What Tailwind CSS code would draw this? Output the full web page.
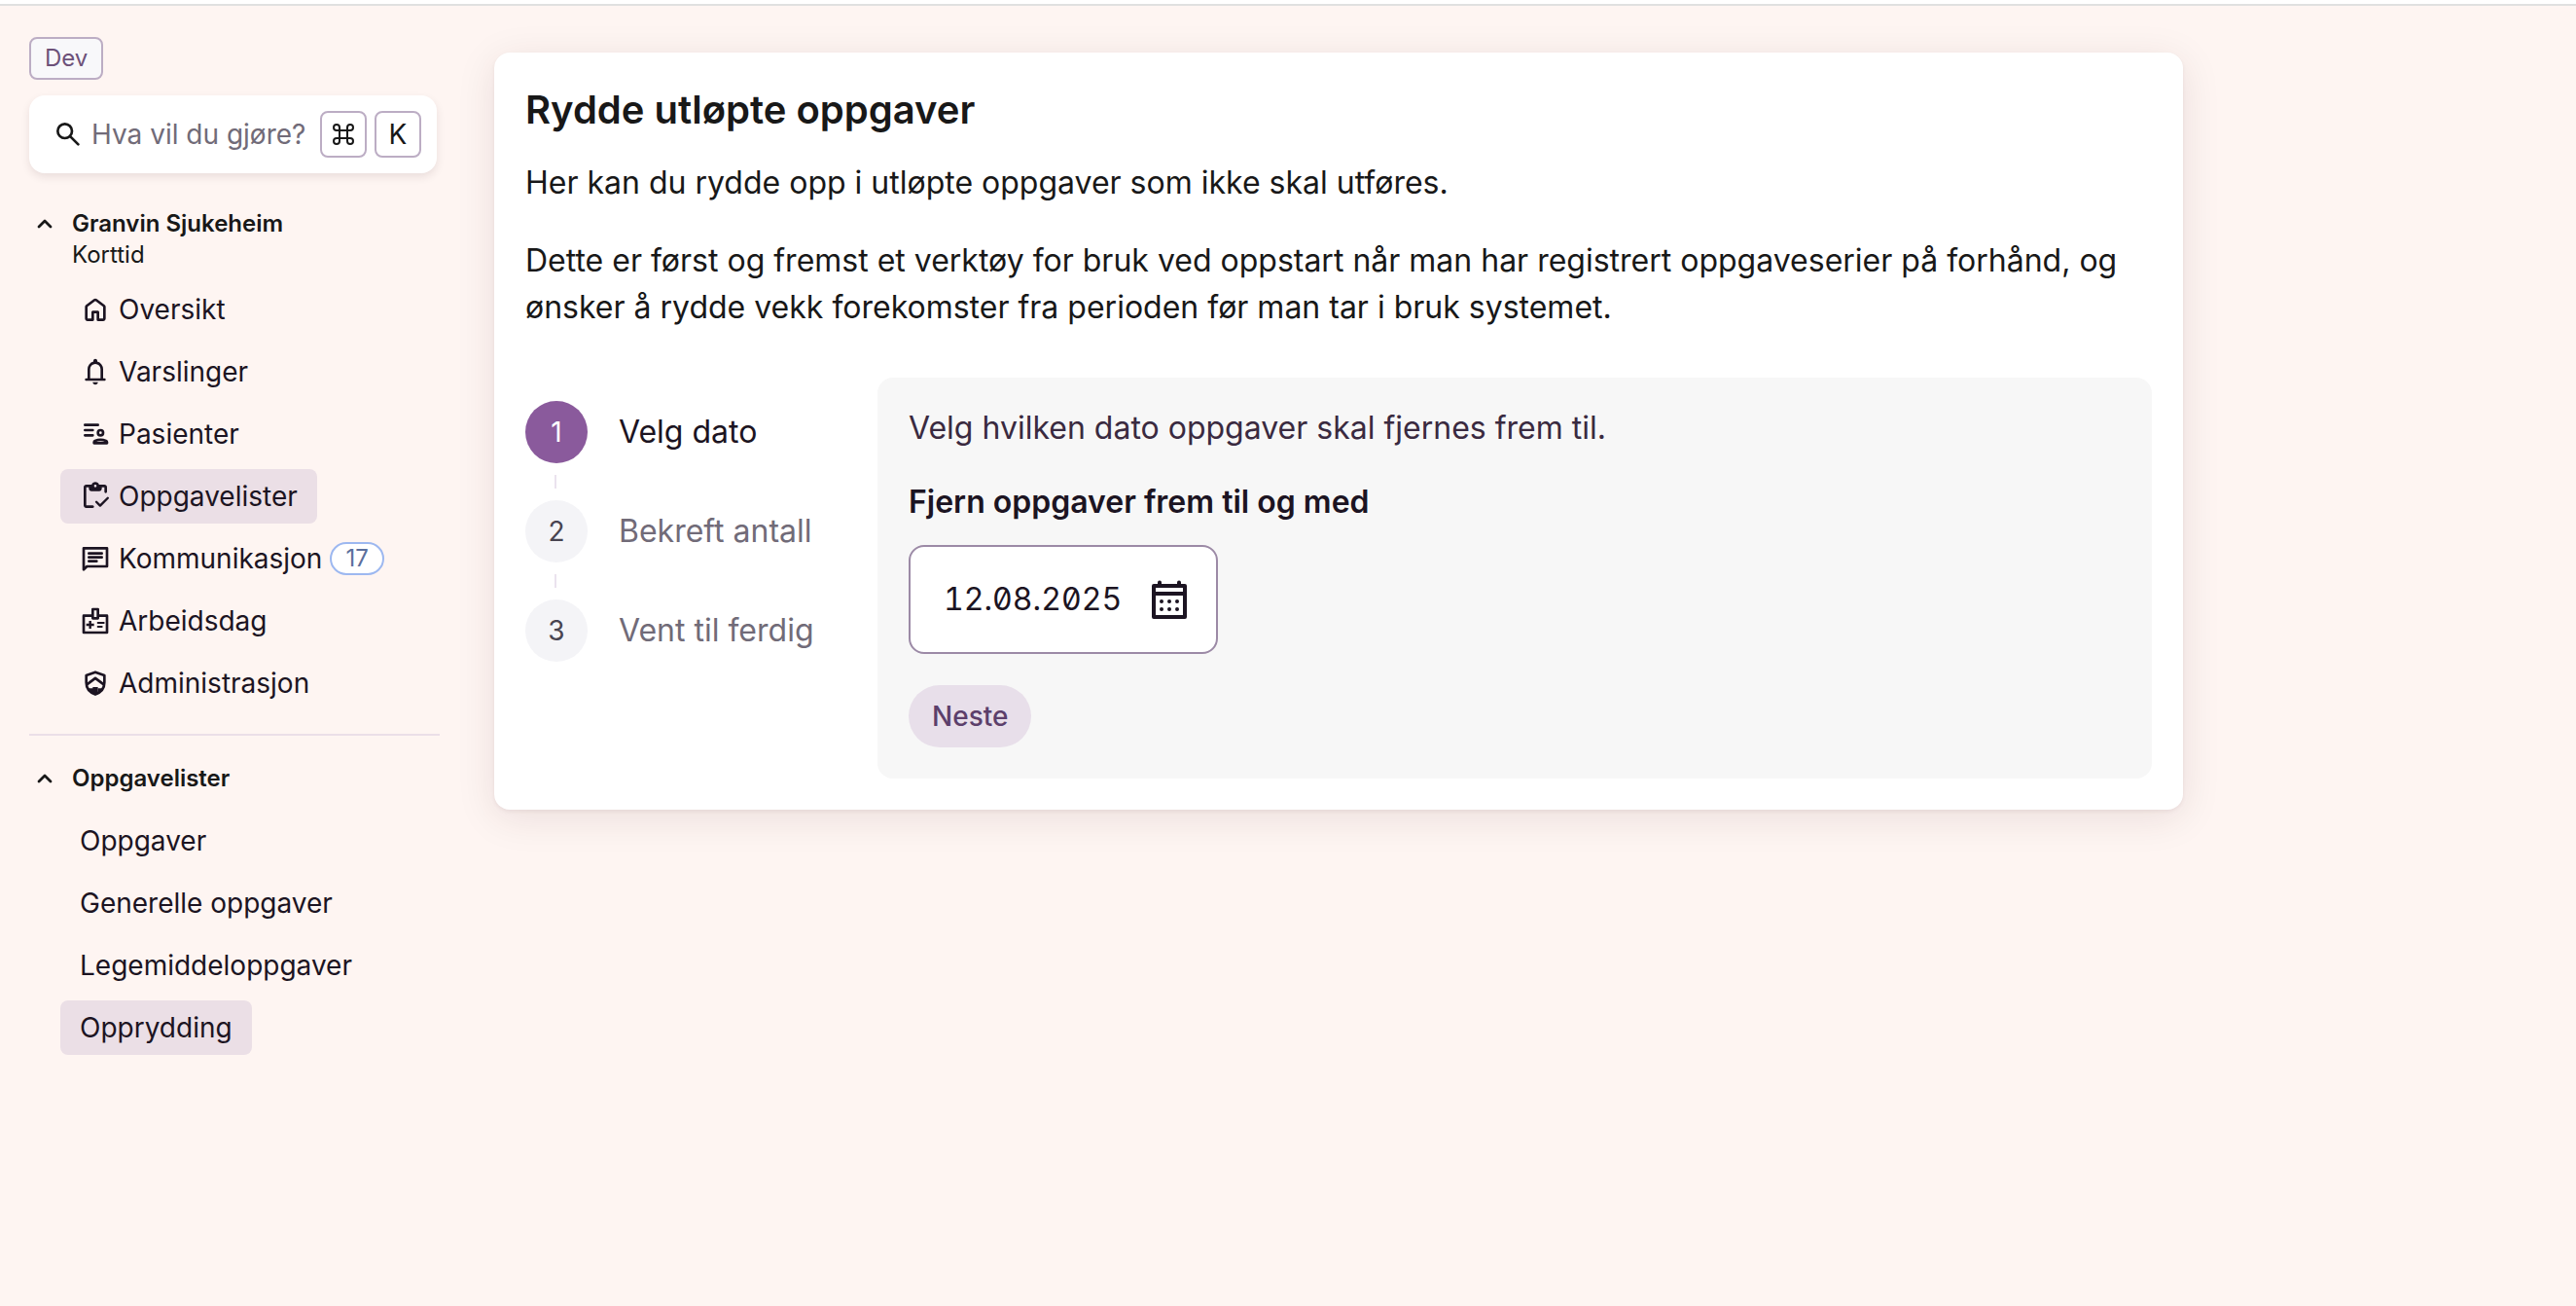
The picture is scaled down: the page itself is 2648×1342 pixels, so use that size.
<!DOCTYPE html>
<html lang="no">
<head>
    <meta charset="UTF-8">
    <meta name="viewport" content="width=device-width, initial-scale=1.0">
    <title>Rydde utløpte oppgaver</title>
    <script src="https://cdn.jsdelivr.net/npm/@tailwindcss/browser@4"></script>
</head>
<body class="min-h-screen bg-[#fef5f2] font-[Inter,sans-serif] text-[#181818]">
    <header class="h-[6px] border-b-2 border-[#e0e0e0] bg-white"></header>

    <div class="flex">
        <!-- Sidebar -->
        <aside class="w-[508px] shrink-0 pl-[30px] pr-14 pt-8">
            <span class="inline-flex h-11 items-center rounded-lg border-2 border-[#bcadc4] bg-[#f8f8fa] px-[14px] text-2xl text-[#6d5179]">Dev</span>

            <div class="mr-[3px] mt-4 flex h-20 items-center gap-2 rounded-2xl bg-white pl-6 pr-4 shadow-[0_4px_8px_rgba(60,30,40,0.1)]">
                <svg class="size-8 shrink-0" viewBox="0 0 24 24" fill="none" stroke="currentColor" stroke-width="2" stroke-linecap="round"><circle cx="9.5" cy="9.5" r="5.5"/><path d="M13.8 13.8l6 6"/></svg>
                <input type="text" aria-label="Søk" placeholder="Hva vil du gjøre?" class="w-full min-w-0 flex-1 bg-transparent text-[28px] outline-none placeholder:text-[#716b78]">
                <kbd class="flex size-12 shrink-0 items-center justify-center rounded-lg border-2 border-[#bcadc4] text-[#181818]">
                    <svg class="size-6" viewBox="0 0 24 24" fill="none" stroke="currentColor" stroke-width="2"><path d="M8 8h8v8H8zM8 8V5a3 3 0 1 0-3 3h3M16 8V5a3 3 0 1 1 3 3h-3M8 16v3a3 3 0 1 1-3-3h3M16 16v3a3 3 0 1 0 3-3h-3"/></svg>
                </kbd>
                <kbd class="flex size-12 shrink-0 items-center justify-center rounded-lg border-2 border-[#bcadc4] font-[Inter,sans-serif] text-[28px]">K</kbd>
            </div>

            <nav aria-label="Granvin Sjukeheim">
                <button type="button" class="mt-9 flex items-start gap-5 pl-2 text-left text-2xl leading-8">
                    <svg class="mt-2 size-4" viewBox="0 0 16 16" fill="none" stroke="currentColor" stroke-width="2.8" stroke-linecap="round" stroke-linejoin="round"><path d="M2 11l6-6 6 6"/></svg>
                    <span><strong class="block font-semibold">Granvin Sjukeheim</strong>Korttid</span>
                </button>
                <ul class="mt-3 flex flex-col items-start gap-2 pl-8 text-[28px] text-[#1c1422]">
                    <li><a href="#" class="flex h-14 items-center gap-2 rounded-lg px-5">
                        <svg class="size-8" viewBox="0 0 24 24" fill="currentColor"><path d="M6 19h3v-5q0-.425.288-.712T10 13h4q.425 0 .713.288T15 14v5h3v-9l-6-4.500L6 10zm-2 0v-9q0-.475.213-.9t.587-.7l6-4.500q.525-.4 1.200-.4t1.200.4l6 4.500q.375.275.588.7T20 10v9q0 .825-.588 1.413T18 21h-4q-.425 0-.712-.288T13 20v-5h-2v5q0 .425-.288.713T10 21H6q-.825 0-1.412-.587T4 19"/></svg>
                        Oversikt</a></li>
                    <li><a href="#" class="flex h-14 items-center gap-2 rounded-lg px-5">
                        <svg class="size-8" viewBox="0 0 24 24" fill="currentColor"><path d="M5 19q-.425 0-.712-.288T4 18t.288-.712T5 17h1v-7q0-2.075 1.250-3.687T10.500 4.200v-.7q0-.625.438-1.062T12 2t1.063.438T13.500 3.500v.7q2 .5 3.250 2.113T18 10v7h1q.425 0 .713.288T20 18t-.288.713T19 19zm7 3q-.825 0-1.412-.587T10 20h4q0 .825-.587 1.413T12 22m-4-5h8v-7q0-1.650-1.175-2.825T12 6T9.175 7.175T8 10z"/></svg>
                        Varslinger</a></li>
                    <li><a href="#" class="flex h-14 items-center gap-2 rounded-lg px-5">
                        <svg class="size-8" viewBox="0 0 24 24" fill="none" stroke="currentColor" stroke-width="2" stroke-linecap="round" stroke-linejoin="round"><path d="M4 5h10M4 9h6M4 13h6"/><circle cx="16" cy="11" r="2"/><path d="M11 19v-.6c0-.5.3-.9.8-1.100 2.700-1.100 5.700-1.100 8.400 0 .5.2.8.6.8 1.100v.6z"/></svg>
                        Pasienter</a></li>
                    <li><a href="#" aria-current="page" class="flex h-14 items-center gap-2 rounded-lg bg-[#ebdfe6] px-5">
                        <svg class="size-8" viewBox="0 0 24 24" fill="currentColor"><path fill-rule="evenodd" d="M5 21q-.825 0-1.412-.587T3 19V5q0-.825.588-1.412T5 3h4.175q.275-.875 1.075-1.437T12 1q1 0 1.788.563T14.850 3H19q.825 0 1.413.588T21 5v3.500q0 .425-.288.713T20 9.500t-.712-.288T19 8.500V5h-2v1q0 .825-.587 1.413T15 8H9q-.825 0-1.412-.587T7 6V5H5v14h5q.425 0 .713.288T11 20t-.288.713T10 21zM12 5a1 1 0 1 0 0-2 1 1 0 0 0 0 2z"/><path d="M12.800 16.300l2.900 2.900 5.900-5.900" fill="none" stroke="currentColor" stroke-width="1.800" stroke-linecap="round" stroke-linejoin="round"/></svg>
                        Oppgavelister</a></li>
                    <li><a href="#" class="flex h-14 items-center gap-2 rounded-lg px-5">
                        <svg class="size-8" viewBox="0 0 24 24" fill="none" stroke="currentColor" stroke-width="2" stroke-linecap="round" stroke-linejoin="round"><path d="M3 20.500V4h18v14H5.500zM7 8h10M7 11h10M7 14h6"/></svg>
                        Kommunikasjon
                        <span class="flex h-[34px] items-center rounded-full border-2 border-[#9db8f0] bg-white px-[14px] text-2xl text-[#5b6f9c]">17</span></a></li>
                    <li><a href="#" class="flex h-14 items-center gap-2 rounded-lg px-5">
                        <svg class="size-8" viewBox="0 0 24 24" fill="none" stroke="currentColor" stroke-width="2" stroke-linejoin="round"><path d="M10 8H3v13h18V8h-7M10 3h4v7h-4z"/><path d="M8 12v6M5 15h6" stroke-width="1.800"/><path d="M14 13.500h4.500M14 16.500h3" stroke-width="1.500" stroke-linecap="round"/></svg>
                        Arbeidsdag</a></li>
                    <li><a href="#" class="flex h-14 items-center gap-2 rounded-lg px-5">
                        <svg class="size-8" viewBox="0 0 24 24" fill="none" stroke="currentColor" stroke-width="2" stroke-linejoin="round"><path d="M12 3.500l7 2.500v5.500c0 4.500-3 7.800-7 9.200-4-1.400-7-4.700-7-9.200V6z"/><path d="M5.500 13L12 8.200l6.500 4.800"/><path d="M10 15h4v5.500h-4zM6 16l4 0v4.500z" fill="currentColor" stroke="none"/><path d="M18 16h-4v4.500z" fill="currentColor" stroke="none"/></svg>
                        Administrasjon</a></li>
                </ul>
            </nav>

            <hr class="mt-6 border-t-2 border-[#ebdfe8]">

            <nav aria-label="Oppgavelister">
                <button type="button" class="mt-7 flex items-start gap-5 pl-2 text-left text-2xl leading-8">
                    <svg class="mt-2 size-4" viewBox="0 0 16 16" fill="none" stroke="currentColor" stroke-width="2.8" stroke-linecap="round" stroke-linejoin="round"><path d="M2 11l6-6 6 6"/></svg>
                    <strong class="font-semibold">Oppgavelister</strong>
                </button>
                <ul class="mt-5 flex flex-col items-start gap-2 pl-8 text-[28px] text-[#1c1422]">
                    <li><a href="#" class="flex h-14 items-center rounded-lg px-5">Oppgaver</a></li>
                    <li><a href="#" class="flex h-14 items-center rounded-lg px-5">Generelle oppgaver</a></li>
                    <li><a href="#" class="flex h-14 items-center rounded-lg px-5">Legemiddeloppgaver</a></li>
                    <li><a href="#" aria-current="page" class="flex h-14 items-center rounded-lg bg-[#ebdfe6] px-5">Opprydding</a></li>
                </ul>
            </nav>
        </aside>

        <!-- Content -->
        <main class="min-w-0 flex-1 pb-12 pr-12 pt-12">
            <section class="max-w-[1736px] rounded-2xl bg-white p-8 text-[32px] leading-[48px] shadow-[0_2px_4px_rgba(60,20,30,0.06),0_8px_40px_rgba(60,20,30,0.1)]">
                <h1 class="text-[40px] font-semibold leading-[54px]">Rydde utløpte oppgaver</h1>
                <p class="mt-6">Her kan du rydde opp i utløpte oppgaver som ikke skal utføres.</p>
                <p class="mt-8">Dette er først og fremst et verktøy for bruk ved oppstart når man har registrert oppgaveserier på forhånd, og ønsker å rydde vekk forekomster fra perioden før man tar i bruk systemet.</p>

                <div class="mt-12 flex">
                    <ol class="w-[362px] shrink-0 pt-6">
                        <li class="flex items-center gap-8 text-[#1c1422]">
                            <span class="flex size-16 items-center justify-center rounded-full bg-[#8a5a9c] text-[28px] text-white">1</span>Velg dato
                        </li>
                        <li class="my-3 ml-[30px] h-[14px] w-[2px] bg-[#ebe3ee]" aria-hidden="true"></li>
                        <li class="flex items-center gap-8 text-[#716b78]">
                            <span class="flex size-16 items-center justify-center rounded-full bg-[#f4f4f7] text-[28px] text-[#484450]">2</span>Bekreft antall
                        </li>
                        <li class="my-3 ml-[30px] h-[14px] w-[2px] bg-[#ebe3ee]" aria-hidden="true"></li>
                        <li class="flex items-center gap-8 text-[#716b78]">
                            <span class="flex size-16 items-center justify-center rounded-full bg-[#f4f4f7] text-[28px] text-[#484450]">3</span>Vent til ferdig
                        </li>
                    </ol>

                    <form class="flex-1 rounded-2xl bg-[#f7f7f7] p-8">
                        <p class="-mt-1 text-[#3a2a40]">Velg hvilken dato oppgaver skal fjernes frem til.</p>
                        <label for="dato" class="mt-7 block font-semibold text-[#1c1422]">Fjern oppgaver frem til og med</label>
                        <div class="mt-5 flex h-28 w-[318px] items-center justify-between rounded-2xl border-2 border-[#9c8aa6] bg-white pl-[34px] pr-6 text-[#1c1422]">
                            <input id="dato" type="text" value="12.08.2025" class="w-[190px] bg-transparent slashed-zero tabular-nums outline-none">
                            <button type="button" aria-label="Velg dato">
                                <svg class="size-12" viewBox="0 0 24 24" fill="none" stroke="currentColor" stroke-width="2" stroke-linecap="round" stroke-linejoin="round"><path d="M4 5h16v16H4zM4 9h16M7 3.200V5M17 3.200V5"/><path d="M8 13h.01M12 13h.01M16 13h.01M8 17h.01M12 17h.01M16 17h.01"/></svg>
                            </button>
                        </div>
                        <button type="button" class="mt-8 flex h-16 items-center rounded-full bg-[#e8dfea] px-6 text-[28px] font-medium text-[#5c3f6b]">Neste</button>
                    </form>
                </div>
            </section>
        </main>
    </div>
</body>
</html>
